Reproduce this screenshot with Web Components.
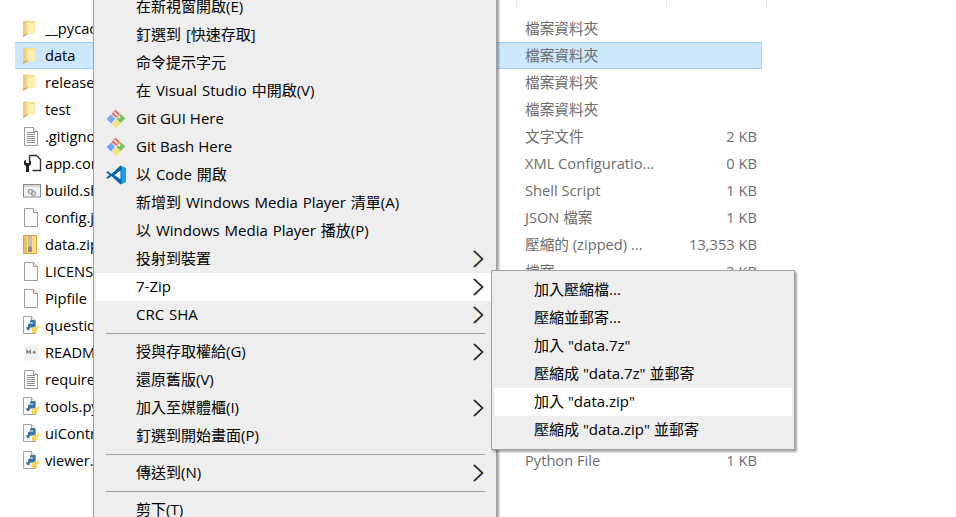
<!DOCTYPE html>
<html lang="zh-Hant">
<head>
<meta charset="utf-8">
<title>Explorer</title>
<style>
  html, body { margin: 0; height: 100%; background: #fff; overflow: hidden; }
  body { font: 14.67px "Open Sans", "Noto Sans CJK TC", sans-serif; }
</style>
</head>
<body>
<explorer-view>
  <file-row icon="folder" name="__pycache__" type="檔案資料夾"></file-row>
  <file-row icon="folder" name="data" type="檔案資料夾" selected></file-row>
  <file-row icon="folder" name="release" type="檔案資料夾"></file-row>
  <file-row icon="folder" name="test" type="檔案資料夾"></file-row>
  <file-row icon="text" name=".gitignore" type="文字文件" size="2 KB"></file-row>
  <file-row icon="config" name="app.config" type="XML Configuratio..." size="0 KB"></file-row>
  <file-row icon="shell" name="build.sh" type="Shell Script" size="1 KB"></file-row>
  <file-row icon="blank" name="config.json" type="JSON 檔案" size="1 KB"></file-row>
  <file-row icon="zip" name="data.zip" type="壓縮的 (zipped) ..." size="13,353 KB"></file-row>
  <file-row icon="blank" name="LICENSE" type="檔案" size="2 KB"></file-row>
  <file-row icon="blank" name="Pipfile"></file-row>
  <file-row icon="python" name="questions.py"></file-row>
  <file-row icon="md" name="README.md"></file-row>
  <file-row icon="text" name="requirements.txt"></file-row>
  <file-row icon="python" name="tools.py"></file-row>
  <file-row icon="python" name="uiController.py"></file-row>
  <file-row icon="python" name="viewer.py" type="Python File" size="1 KB"></file-row>
</explorer-view>

<context-menu style="left:93px;top:-10px;width:404px">
  <menu-item>在新視窗開啟(E)</menu-item>
  <menu-item>釘選到 [快速存取]</menu-item>
  <menu-item>命令提示字元</menu-item>
  <menu-item>在 Visual Studio 中開啟(V)</menu-item>
  <menu-item icon="git" style="word-spacing:0">Git GUI Here</menu-item>
  <menu-item icon="git" style="word-spacing:0">Git Bash Here</menu-item>
  <menu-item icon="vscode">以 Code 開啟</menu-item>
  <menu-item>新增到 Windows Media Player 清單(A)</menu-item>
  <menu-item>以 Windows Media Player 播放(P)</menu-item>
  <menu-item arrow>投射到裝置</menu-item>
  <menu-item arrow active>7-Zip</menu-item>
  <menu-item arrow>CRC SHA</menu-item>
  <menu-sep></menu-sep>
  <menu-item arrow>授與存取權給(G)</menu-item>
  <menu-item>還原舊版(V)</menu-item>
  <menu-item arrow>加入至媒體櫃(I)</menu-item>
  <menu-item>釘選到開始畫面(P)</menu-item>
  <menu-sep></menu-sep>
  <menu-item arrow>傳送到(N)</menu-item>
  <menu-sep></menu-sep>
  <menu-item>剪下(T)</menu-item>
</context-menu>

<context-menu style="left:491px;top:270px;width:304px" submenu>
  <menu-item sub>加入壓縮檔...</menu-item>
  <menu-item sub>壓縮並郵寄...</menu-item>
  <menu-item sub>加入 "data.7z"</menu-item>
  <menu-item sub>壓縮成 "data.7z" 並郵寄</menu-item>
  <menu-item sub active>加入 "data.zip"</menu-item>
  <menu-item sub>壓縮成 "data.zip" 並郵寄</menu-item>
</context-menu>

<script>
const docShape = `<path d="M1.5.5h9l4 4v14h-13z" fill="#fdfdfd" stroke="#9b9b9b"/><path d="M10.5.5v4h4" fill="#eee" stroke="#9b9b9b"/>`;
const icons = {
  folder: `<svg width="12" height="17" viewBox="0 0 12 17"><path d="M0 1l5-1v14l-5 3z" fill="#f0cd7a"/><path d="M3 1h9v13H3z" fill="#fbe08c"/><path d="M5 3h7v11H5z" fill="#ffeeb4"/><path d="M0 15l5-2v1l-5 3z" fill="#dca93f"/></svg>`,
  text: `<svg width="16" height="19" viewBox="0 0 16 19">${docShape}<path d="M4 5.500h8M4 7.500h8M4 9.500h8M4 11.500h8M4 13.500h8M4 15.500h8" stroke="#8d8d8d"/></svg>`,
  blank: `<svg width="16" height="19" viewBox="0 0 16 19">${docShape}</svg>`,
  config: `<svg width="19" height="19" viewBox="0 0 19 19"><path d="M6.500 1.500h7l4 4v11h-8" fill="#fff" stroke="#333" stroke-width="1.400"/><path d="M6.500 1.500v7" stroke="#333" stroke-width="1.400"/><path d="M1 7v3.500l2 1.500v6h3v-6l2-1.500V7L6 6v3H3V6z" fill="#222"/></svg>`,
  shell: `<svg width="18" height="14" viewBox="0 0 18 14"><rect x=".5" y=".5" width="17" height="12.500" fill="#f3f3f3" stroke="#8a8a8a"/><path d="M1 1h16v2H1z" fill="#d5d5d5"/><circle cx="7.500" cy="7.500" r="2.200" fill="none" stroke="#8d9aa8" stroke-width="1.300"/><circle cx="10.500" cy="9.500" r="2" fill="none" stroke="#9aa5b0" stroke-width="1.300"/></svg>`,
  zip: `<svg width="14" height="19" viewBox="0 0 14 19"><rect x=".5" y=".5" width="13" height="18" fill="#fbdc85" stroke="#d9ab3d"/><path d="M1 1h3v17H1z" fill="#eec05c"/><rect x="5.500" y="0" width="3" height="14" fill="#9a9a9a"/><path d="M6 2h2M6 4h2M6 6h2M6 8h2M6 10h2" stroke="#ececec"/><rect x="5" y="12" width="4" height="5" rx="1" fill="#8a8a8a"/></svg>`,
  python: `<svg width="17" height="19" viewBox="0 0 17 19"><path d="M.5.5h8l4 4v13H.5z" fill="#fafafa" stroke="#a4a4a4"/><path d="M8.500.5v4h4" fill="#eee" stroke="#a4a4a4"/><path d="M5 11V9c0-1 .8-1.600 2-1.600h3V6.500H7V5.300c0-.8 1-1.300 2.500-1.300S12 4.500 12 5.500V10c0 .8-.7 1.400-1.500 1.400H8C7 11.400 6.500 12 6.500 13v1H5c-1 0-1.800-1-1.800-2.200C3.200 10.600 4 11 5 11z" fill="#3572a5"/><path d="M14.500 8.500c1 0 1.800 1 1.800 2.300s-.8 2.200-1.800 2.200h-3.500v1h3v1.300c0 1-1.300 1.700-2.700 1.700s-2.500-.6-2.500-1.600v-2.500c0-.9.700-1.500 1.500-1.500h2.600c1 0 1.600-.7 1.600-1.500V8.500z" fill="#ffd43b"/></svg>`,
  md: `<svg width="17" height="17" viewBox="0 0 17 17"><path d="M1 1.500l15-.5.500 15-15 .5z" fill="#f1f1f1"/><path d="M4 10V6.500l1.700 2 1.700-2V10" fill="none" stroke="#777" stroke-width="1.100"/><path d="M9.500 8.200h3.400M11.200 6.500v3.400" stroke="#777" stroke-width="1.100"/></svg>`,
  git: `<svg width="20" height="20" viewBox="0 0 20 20"><path d="M10 10.500l-4 4 4 4.500 4.500-4.500z" fill="#fbe27c"/><path d="M.5 10l4.500-4.500 4 4.500-4 4.500z" fill="#6fa8f7"/><path d="M11 10.500l3.500 3.500 5-4.500-5-4.500-3.500 4z" fill="#7cc35b"/><path d="M5.500 5l4-4.500 4.500 4.500-4 4z" fill="#ee6a62"/><path d="M8 3l3.500 3.500" stroke="#fff" stroke-width="1.500"/><path d="M12.500 7.500l1.500 1.500" stroke="#fff" stroke-width="1.500"/></svg>`,
  vscode: `<svg width="20" height="20" viewBox="0 0 20 20"><path d="M14.500.5L20 3v14l-5.500 2.500L14.500 14V6z" fill="#1f9cf0"/><path d="M14.500.5L5.500 9 2 6.200 0 7.200 3.500 10 0 12.800l2 1 3.500-2.800 9 8.500 1-1.500V2z" fill="#0065a9"/><path d="M14.500 5.500L8.500 10l6 4.500z" fill="#fff"/></svg>`
};

class ExplorerView extends HTMLElement {
  constructor() {
    super();
    this.attachShadow({ mode: "open" }).innerHTML = `
      <style>
        :host { display: flex; flex-direction: column; padding-top: 15px; }
        .ticks { position: absolute; left: 0; top: 0; width: 767px; height: 7px; }
        .ticks i { position: absolute; top: 0; width: 1px; height: 7px; background: #e5e5e5; }
      </style>
      <div class="ticks"><i style="left:516px"></i><i style="left:666px"></i><i style="left:766px"></i></div>
      <slot></slot>`;
  }
}

class FileRow extends HTMLElement {
  constructor() {
    super();
    this.attachShadow({ mode: "open" }).innerHTML = `
      <style>
        :host { display: grid; grid-template-columns: 30px 480px 1fr auto; align-items: center;
          box-sizing: border-box; width: 747px; height: 27px; margin-left: 15px; padding-right: 4px;
          border: 1px solid transparent; border-left-width: 0; color: #000; }
        :host([selected]) { background: #cce8ff; border-color: #99d1ff; }
        .icon { display: flex; padding-left: 8px; }
        .icon svg { display: block; }
        .name { white-space: nowrap; overflow: hidden; }
        .name, .type, .size { padding-bottom: 2px; }
        .type, .size { color: #6d6d6d; white-space: nowrap; }
      </style>
      <span class="icon"></span><span class="name"></span><span class="type"></span><span class="size"></span>`;
  }
  connectedCallback() {
    const s = this.shadowRoot;
    s.querySelector(".icon").innerHTML = icons[this.getAttribute("icon")] || "";
    s.querySelector(".name").textContent = this.getAttribute("name");
    s.querySelector(".type").textContent = this.getAttribute("type") || "";
    s.querySelector(".size").textContent = this.getAttribute("size") || "";
  }
}

class ContextMenu extends HTMLElement {
  constructor() {
    super();
    this.attachShadow({ mode: "open" }).innerHTML = `
      <style>
        :host { position: absolute; display: flex; flex-direction: column; box-sizing: border-box;
          padding: 2px; background: #eee; border: 1px solid #a0a0a0; font-size: 15px; word-spacing: 1px;
          box-shadow: 2px 2px 2px rgba(0, 0, 0, .35); color: #000; }
        :host([submenu]) { padding: 5px 2px; word-spacing: 0; }
      </style>
      <slot></slot>`;
  }
}

class MenuItem extends HTMLElement {
  constructor() {
    super();
    this.attachShadow({ mode: "open" }).innerHTML = `
      <style>
        :host { display: flex; align-items: center; height: 28px; padding-left: 7px; padding-right: 10px; white-space: nowrap; }
        :host([active]) { background: #fff; }
        :host([sub]) { padding-left: 40px; }
        .icon { flex: none; width: 20px; height: 20px; margin-left: 3px; margin-right: 10px; }
        :host([sub]) .icon { display: none; }
        .icon svg { display: block; }
        .label { flex: 1; padding-bottom: 3px; }
        .arrow { flex: none; display: none; }
        :host([arrow]) .arrow { display: block; }
        .arrow path { fill: none; stroke-width: 1.100; }
      </style>
      <span class="icon"></span><span class="label"><slot></slot></span>
      <svg class="arrow" width="11" height="18" viewBox="0 0 11 18">
        <path d="M.4 1l8.500 8-8.500 8" stroke="#e08a30"/>
        <path d="M1.600 1l8.500 8-8.500 8" stroke="#2f8de0"/>
        <path d="M1 1l8.500 8-8.500 8" stroke="#1a1a1a"/>
      </svg>`;
  }
  connectedCallback() {
    this.shadowRoot.querySelector(".icon").innerHTML = icons[this.getAttribute("icon")] || "";
  }
}

class MenuSep extends HTMLElement {
  constructor() {
    super();
    this.attachShadow({ mode: "open" }).innerHTML = `
      <style>
        :host { display: flex; align-items: center; height: 9px; padding: 0 9px 0 10px; }
        div { flex: 1; height: 1px; background: #a0a0a0; }
      </style>
      <div></div>`;
  }
}

customElements.define("explorer-view", ExplorerView);
customElements.define("file-row", FileRow);
customElements.define("context-menu", ContextMenu);
customElements.define("menu-item", MenuItem);
customElements.define("menu-sep", MenuSep);
</script>
</body>
</html>
